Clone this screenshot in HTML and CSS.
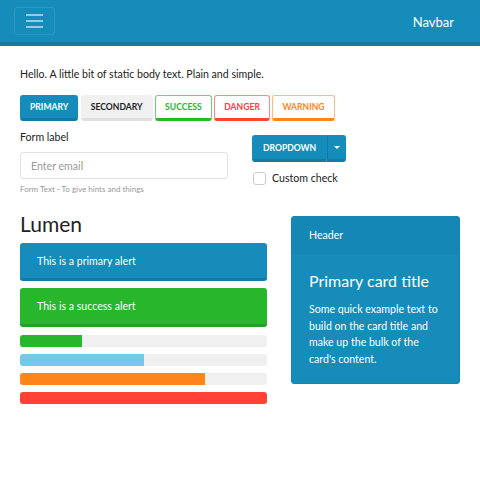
FILE: index.html
```html
<!DOCTYPE html>
<html>
<head>
<meta charset="utf-8">
<link rel="stylesheet" href="styles.css">
</head>
<body>
<nav class="navbar">
  <button class="toggler"><span></span><span></span><span></span></button>
  <span class="brand">Navbar</span>
</nav>
<main class="page">
  <p class="lead-text">Hello. A little bit of static body text. Plain and simple.</p>
  <div class="btn-row">
    <button class="btn btn-primary">Primary</button>
    <button class="btn btn-secondary">Secondary</button>
    <button class="btn btn-outline-success">Success</button>
    <button class="btn btn-outline-danger">Danger</button>
    <button class="btn btn-outline-warning">Warning</button>
  </div>
  <div class="row-form">
    <div class="col-half">
      <label class="form-label">Form label</label>
      <input class="form-input" placeholder="Enter email">
      <div class="form-text">Form Text - To give hints and things</div>
    </div>
    <div class="col-half col-right">
      <div class="split">
        <button class="btn btn-primary split-main">Dropdown</button>
        <button class="btn btn-primary split-caret"><span class="caret"></span></button>
      </div>
      <label class="check"><span class="check-box"></span>Custom check</label>
    </div>
  </div>
  <div class="row-bottom">
    <div class="col-left">
      <h1 class="title">Lumen</h1>
      <div class="alert alert-primary">This is a primary alert</div>
      <div class="alert alert-success">This is a success alert</div>
      <div class="progress"><div class="bar bar-success" style="width:25%"></div></div>
      <div class="progress"><div class="bar bar-info" style="width:50%"></div></div>
      <div class="progress"><div class="bar bar-warning" style="width:75%"></div></div>
      <div class="progress"><div class="bar bar-danger" style="width:100%"></div></div>
    </div>
    <div class="col-right-card">
      <div class="card">
        <div class="card-header">Header</div>
        <div class="card-body">
          <h4 class="card-title">Primary card title</h4>
          <p class="card-text">Some quick example text to build on the card title and make up the bulk of the card's content.</p>
        </div>
      </div>
    </div>
  </div>
</main>
</body>
</html>
```
FILE: styles.css
```css
* { box-sizing: border-box; }
body {
  margin: 0;
  font-family: Lato, "Noto Sans", sans-serif;
  font-size: 10.6px;
  color: #222;
  background: #fff;
}
.navbar {
  height: 46px;
  background: #158cba;
  border-bottom: 4px solid #127ba3;
  display: flex;
  align-items: flex-start;
  justify-content: space-between;
  padding: 7px 26px 0 14px;
}
.toggler {
  width: 41px;
  height: 28px;
  border: 1px solid rgba(255,255,255,0.1);
  border-radius: 3px;
  background: transparent;
  display: flex;
  flex-direction: column;
  justify-content: center;
  align-items: center;
  gap: 4px;
  padding: 0;
}
.toggler span {
  display: block;
  width: 17px;
  height: 2px;
  background: rgba(255,255,255,0.55);
}
.brand {
  color: #fff;
  font-size: 13px;
  line-height: 30px;
}
.page { padding: 0 20px; }
.lead-text { margin: 21px 0 14px; line-height: 14px; }
.btn-row { display: flex; gap: 2.5px; }
.btn {
  font-family: inherit;
  font-size: 8.6px;
  font-weight: 700;
  text-transform: uppercase;
  height: 26px;
  padding: 0 9px;
  border-radius: 3px;
  border: 1px solid transparent;
  border-bottom-width: 3px;
  cursor: pointer;
}
.btn-primary { background: #158cba; color: #fff; border-color: #158cba; border-bottom-color: #127ba3; }
.btn-secondary { background: #f0f0f0; color: #222; border-color: #f0f0f0; border-bottom-color: #e0e0e0; }
.btn-outline-success { background: #fff; color: #28b62c; border-color: #6fd372; border-bottom-color: #28b62c; }
.btn-outline-danger { background: #fff; color: #ff4136; border-color: #ff8a84; border-bottom-color: #ff4136; }
.btn-outline-warning { background: #fff; color: #ff851b; border-color: #ffba7d; border-bottom-color: #ff851b; }
.row-form { display: flex; gap: 24px; margin-top: 9px; }
.col-half { flex: 1; }
.col-right { padding-top: 5px; }
.form-label { display: block; line-height: 14px; margin-bottom: 8px; }
.form-input {
  display: block;
  width: 100%;
  height: 27px;
  border: 1px solid #e2e2e2;
  border-radius: 3px;
  padding: 0 10px;
  font-family: inherit;
  font-size: 10.6px;
  color: #555;
}
.form-input::placeholder { color: #999; }
.form-text { font-size: 8px; color: #999; margin-top: 5px; line-height: 10px; }
.split { display: flex; }
.split-main { height: 27px; padding: 0 10px; border-radius: 3px 0 0 3px; }
.split-caret { height: 27px; width: 19px; padding: 0; border-radius: 0 3px 3px 0; border-left: 1px solid #127ba3; display: flex; align-items: center; justify-content: center; }
.caret { width: 0; height: 0; border-left: 3px solid transparent; border-right: 3px solid transparent; border-top: 3px solid #fff; }
.check { display: flex; align-items: center; gap: 6px; margin-top: 9px; line-height: 14px; }
.check-box { width: 13px; height: 13px; border: 1px solid #ccc; border-radius: 3px; margin-left: 1px; }
.row-bottom { display: flex; gap: 24px; margin-top: 18px; }
.col-left { flex: 0 0 247px; }
.col-right-card { flex: 1; padding-top: 4px; }
.title { font-size: 21px; font-weight: 400; margin: 0 0 7px; line-height: 24px; }
.alert {
  height: 38px;
  padding: 0 17px;
  display: flex;
  align-items: center;
  color: #fff;
  border-radius: 3px;
  border-bottom: 3px solid;
  margin-bottom: 7px;
}
.alert-primary { background: #158cba; border-bottom-color: #127ba3; }
.alert-success { background: #28b62c; border-bottom-color: #23a127; height: 39px; margin-bottom: 8px; }
.progress { height: 12px; background: #f0f0f0; border-radius: 3px; overflow: hidden; margin-bottom: 7px; }
.bar { height: 100%; }
.bar-success { background: #28b62c; }
.bar-info { background: #75caeb; }
.bar-warning { background: #ff851b; }
.bar-danger { background: #ff4136; }
.card { background: #158cba; color: #fff; border-radius: 3px; border: 1px solid #1585b0; }
.card-header { background: rgba(0,0,0,0.03); height: 37px; padding: 0 17px; display: flex; align-items: center; border-bottom: 1px solid rgba(0,0,0,0.02);}
.card-body { padding: 16px 17px 16px; }
.card-title { font-size: 16px; font-weight: 400; margin: 0 0 9px; line-height: 22px; }
.card-text { margin: 0; line-height: 16.5px; }
```
